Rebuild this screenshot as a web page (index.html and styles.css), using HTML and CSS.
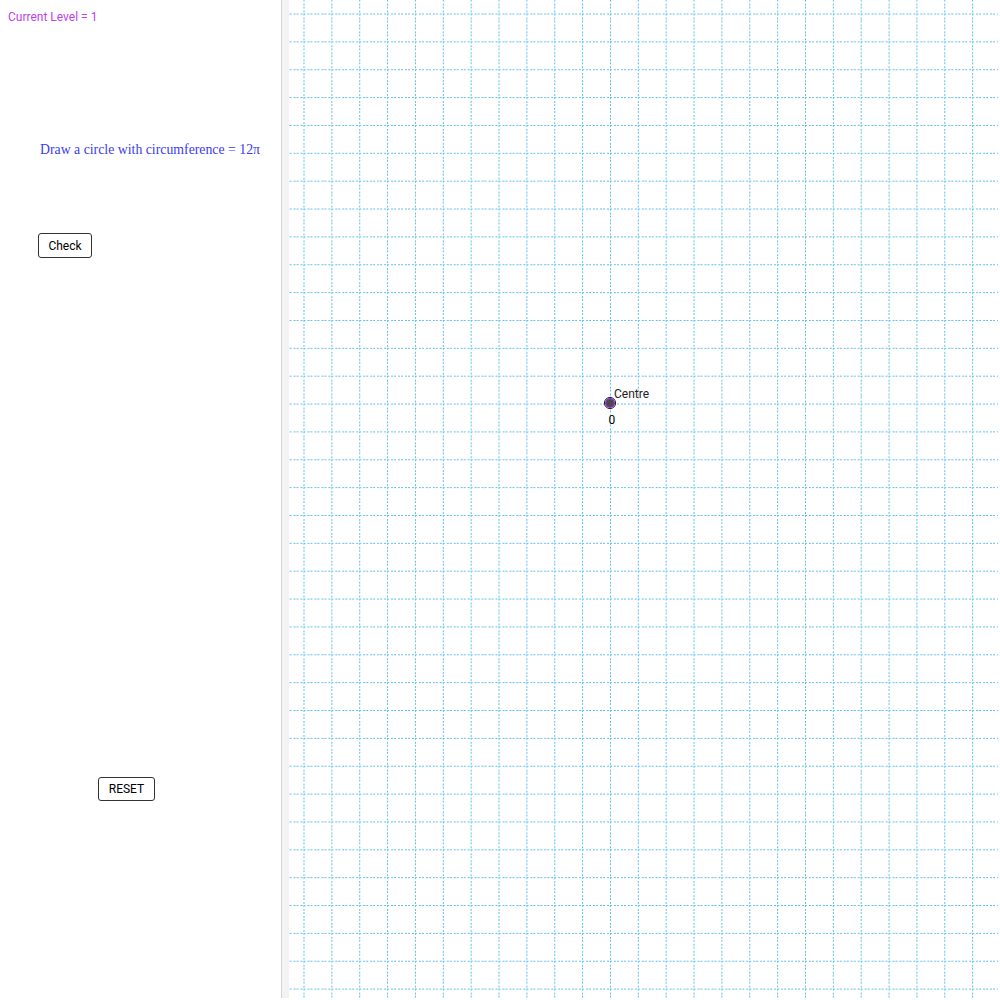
FILE: index.html
```html
<!DOCTYPE html>
<html>
<head>
<meta charset="utf-8">
<link rel="stylesheet" href="styles.css">
</head>
<body>
<div class="app">
  <aside class="panel">
    <div class="level">Current Level = 1</div>
    <div class="task">Draw a circle with circumference = 12π</div>
    <button class="btn btn-check">Check</button>
    <button class="btn btn-reset">RESET</button>
  </aside>
  <div class="divider"></div>
  <main class="canvas">
    <svg class="grid" width="710" height="998" viewBox="0 0 710 998">
      <defs>
        <pattern id="g" patternUnits="userSpaceOnUse" x="14.5" y="13.5" width="27.86" height="27.86">
          <line x1="0" y1="0" x2="27.86" y2="0" stroke="#5fbff0" stroke-width="1" stroke-dasharray="2,1.5" shape-rendering="crispEdges"/>
          <line x1="0" y1="0" x2="0" y2="27.86" stroke="#5fbff0" stroke-width="1" stroke-dasharray="2,1.5" shape-rendering="crispEdges"/>
        </pattern>
      </defs>
      <rect x="0" y="0" width="709" height="998" fill="url(#g)"/>
      <circle cx="321" cy="403" r="5.6" fill="none" stroke="#222" stroke-width="1"/>
      <circle cx="321" cy="403" r="4.3" fill="#4a4a4a" stroke="#8a2cc8" stroke-width="1.4"/>
      <text x="325" y="398" class="lbl">Centre</text>
      <text x="319.5" y="424" class="lbl lbl-o">0</text>
    </svg>
  </main>
</div>
</body>
</html>
```
FILE: styles.css
```css
html, body {
  margin: 0;
  padding: 0;
  background: #fff;
  font-family: Roboto, "Liberation Sans", sans-serif;
}
.app {
  display: flex;
  width: 1000px;
  height: 1000px;
}
.panel {
  width: 281px;
  flex: none;
  position: relative;
}
.level {
  color: #c040f0;
  font-size: 12px;
  padding: 10px 0 0 8px;
  line-height: 14px;
}
.task {
  color: #3c3cf0;
  font-family: "Liberation Serif", "DejaVu Serif", serif;
  font-size: 13.8px;
  margin: 118px 0 0 40px;
  line-height: 16px;
}
.btn {
  display: block;
  font-family: Roboto, "Liberation Sans", sans-serif;
  font-size: 12px;
  color: #000;
  background: #fff;
  border: 1px solid #333;
  border-bottom-width: 1.5px;
  border-radius: 3px;
  padding: 0;
  height: 25px;
  line-height: 22px;
}
.btn-check {
  width: 54px;
  margin: 75px 0 0 38px;
}
.btn-reset {
  width: 57px;
  margin: 519px 0 0 98px;
  height: 24px;
}
.divider {
  width: 7px;
  flex: none;
  height: 998px;
  background: #f3f3f3;
  border-left: 1px solid #d6d6d6;
}
.canvas {
  flex: none;
  width: 711px;
  height: 998px;
}
.grid {
  display: block;
}
.lbl {
  font-family: Roboto, "Liberation Sans", sans-serif;
  font-size: 12px;
  fill: #222;
}
.lbl-o {
  fill: #000;
}
```
